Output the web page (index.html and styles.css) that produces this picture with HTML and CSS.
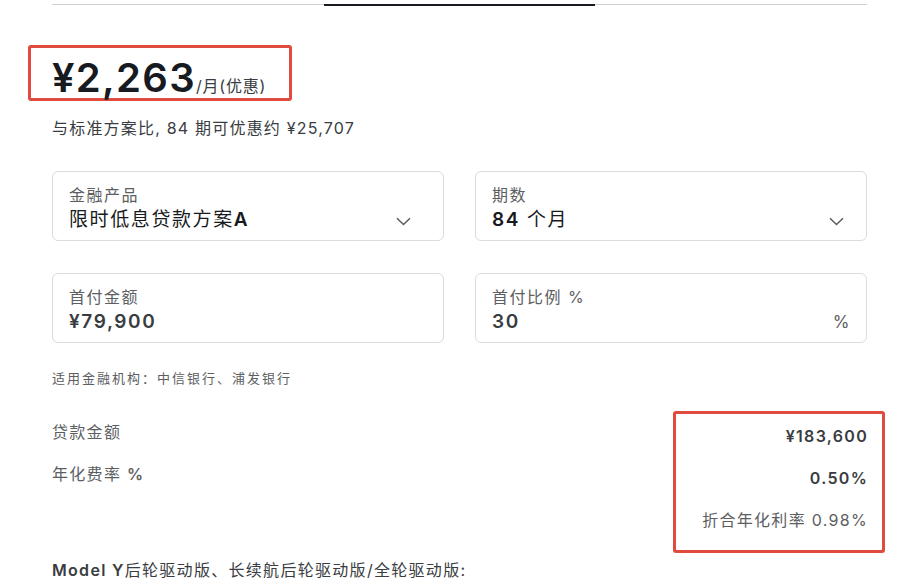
FILE: index.html
```html
<!DOCTYPE html>
<html>

<head lang="zh-CN">
    <meta charset="UTF-8">
    <title>贷款计算</title>
    <link rel="stylesheet" href="styles.css">
</head>

<body>
    <div class="page">
        <!-- 顶部选项卡 -->
        <div class="tabs">
            <div class="tab"></div>
            <div class="tab active"></div>
            <div class="tab"></div>
        </div>

        <!-- 月供 -->
        <div class="price-box">
            <span class="price">¥2,263</span><span class="price-unit">/月(优惠)</span>
        </div>
        <p class="saving">与标准方案比, 84 期可优惠约 ¥25,707</p>

        <!-- 表单 -->
        <div class="form-grid">
            <div class="field">
                <div class="field-label">金融产品</div>
                <div class="field-value select wide">
                    <span>限时低息贷款方案<b>A</b></span>
                    <svg class="chevron" width="15" height="9" viewBox="0 0 15 9">
                        <path d="M1 1.2l6.5 6.3 6.5-6.3" fill="none" stroke="#5c5e62" stroke-width="1.6" />
                    </svg>
                </div>
            </div>
            <div class="field">
                <div class="field-label">期数</div>
                <div class="field-value select">
                    <span><b>84</b> 个月</span>
                    <svg class="chevron" width="15" height="9" viewBox="0 0 15 9">
                        <path d="M1 1.2l6.5 6.3 6.5-6.3" fill="none" stroke="#5c5e62" stroke-width="1.6" />
                    </svg>
                </div>
            </div>
            <div class="field">
                <div class="field-label">首付金额</div>
                <div class="field-value muted"><b>¥79,900</b></div>
            </div>
            <div class="field">
                <div class="field-label">首付比例 %</div>
                <div class="field-value muted select">
                    <b>30</b>
                    <span class="suffix">%</span>
                </div>
            </div>
        </div>

        <p class="note">适用金融机构：中信银行、浦发银行</p>

        <!-- 计算结果 -->
        <div class="results">
            <div class="result-labels">
                <div class="result-row">贷款金额</div>
                <div class="result-row">年化费率 <b>%</b></div>
            </div>
            <div class="result-values">
                <div class="result-row strong">¥183,600</div>
                <div class="result-row strong">0.50%</div>
                <div class="result-row">折合年化利率 0.98%</div>
            </div>
        </div>

        <p class="model"><b>Model Y</b>后轮驱动版、长续航后轮驱动版/全轮驱动版:</p>
    </div>
</body>

</html>
```

FILE: styles.css
```css
/* 基础样式 */
body {
    margin: 0;
    background: #ffffff;
    color: #171a20;
    font-family: Inter, "Noto Sans CJK SC", sans-serif;
    letter-spacing: 1.3px;
}

p {
    margin: 0;
}

b {
    font-weight: 600;
}

.page {
    padding: 0 39px 0 52px;
}

/* 选项卡 */
.tabs {
    display: flex;
    height: 4px;
    border-bottom: 1px solid #d0d1d2;
}

.tab {
    flex: 1;
}

.tab.active {
    align-self: flex-end;
    height: 2px;
    margin-bottom: -2px;
    background: #171a20;
}

/* 月供 */
.price-box {
    box-sizing: border-box;
    width: 264px;
    height: 56px;
    margin: 40px 0 0 -24px;
    padding: 10px 0 0 21px;
    border: 3px solid #df4b3e;
    border-radius: 3px;
    white-space: nowrap;
}

.price {
    font-size: 40px;
    line-height: 40px;
    font-weight: 600;
    letter-spacing: 1.3px;
}

.price-unit {
    font-size: 16px;
    letter-spacing: 0.8px;
    color: #393c41;
}

.saving {
    margin-top: 16px;
    font-size: 16px;
    line-height: 22px;
    letter-spacing: 1.2px;
    color: #393c41;
}

/* 表单 */
.form-grid {
    display: grid;
    grid-template-columns: 1fr 1fr;
    column-gap: 31px;
    row-gap: 32px;
    margin-top: 32px;
}

.field {
    box-sizing: border-box;
    height: 70px;
    padding: 13px 22px 0 16px;
    border: 1px solid #dcdcdc;
    border-radius: 6px;
}

.field-label {
    font-size: 16px;
    line-height: 20px;
    letter-spacing: 1.5px;
    color: #5c5e62;
}

.field-value {
    font-size: 19px;
    line-height: 30px;
    letter-spacing: 1.6px;
    color: #171a20;
}

.field-value.muted {
    color: #393c41;
}

.select {
    display: flex;
    align-items: center;
    justify-content: space-between;
}

/* 左侧下拉框的箭头离边框更远 */
.select.wide {
    padding-right: 10px;
}

.chevron {
    display: block;
    margin-top: 2px;
}

.suffix {
    font-size: 17px;
    color: #5c5e62;
    margin-right: -7px;
}

.note {
    margin-top: 25px;
    font-size: 13px;
    line-height: 20px;
    letter-spacing: 2px;
    color: #5c5e62;
}

/* 计算结果 */
.results {
    display: flex;
    justify-content: space-between;
    align-items: flex-start;
    margin-top: 23px;
}

.result-labels {
    padding-top: 10px;
    display: flex;
    flex-direction: column;
    gap: 20px;
}

.result-values {
    box-sizing: border-box;
    width: 212px;
    margin-right: -18px;
    padding: 11px 14px 19px 0;
    border: 3px solid #df4b3e;
    border-radius: 3px;
    display: flex;
    flex-direction: column;
    gap: 20px;
    text-align: right;
}

.result-row {
    font-size: 16px;
    line-height: 22px;
    letter-spacing: 1.3px;
    color: #5c5e62;
}

.result-row.strong {
    font-weight: 600;
    color: #393c41;
}

.model {
    margin-top: 6px;
    font-size: 16px;
    line-height: 22px;
    color: #393c41;
}
```
